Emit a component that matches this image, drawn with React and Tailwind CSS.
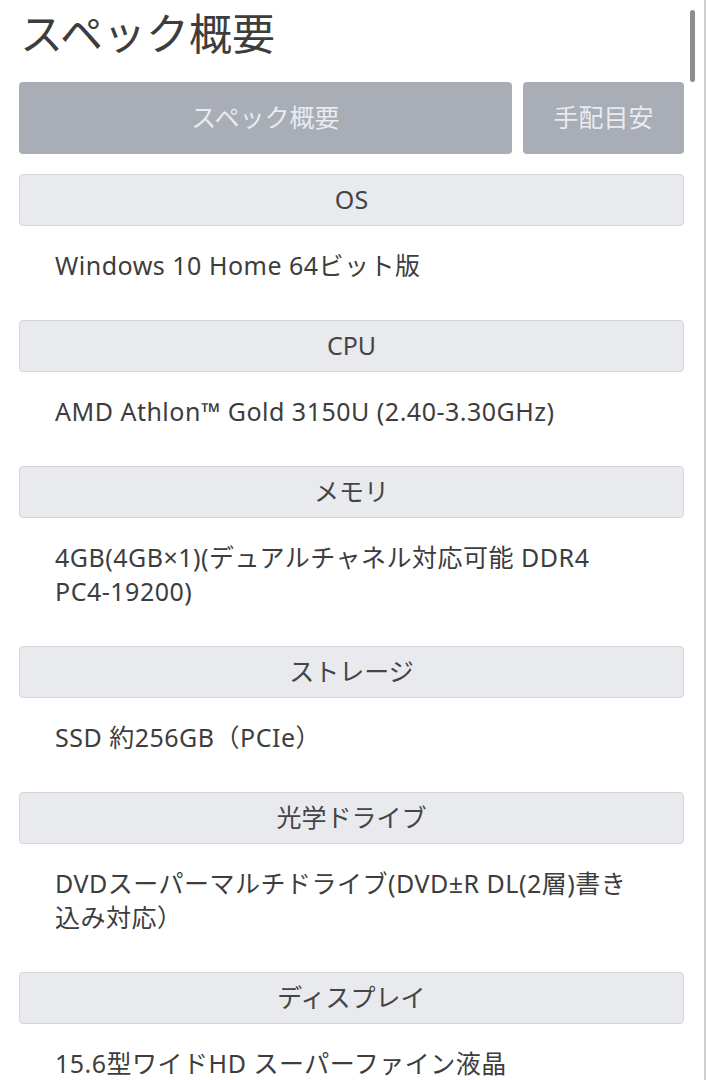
const specs = [
  { label: 'OS', value: 'Windows 10 Home 64ビット版' },
  { label: 'CPU', value: 'AMD Athlon™ Gold 3150U (2.40-3.30GHz)' },
  { label: 'メモリ', value: '4GB(4GB×1)(デュアルチャネル対応可能 DDR4 PC4-19200)' },
  { label: 'ストレージ', value: 'SSD 約256GB（PCIe）' },
  { label: '光学ドライブ', value: 'DVDスーパーマルチドライブ(DVD±R DL(2層)書き込み対応）' },
  { label: 'ディスプレイ', value: '15.6型ワイドHD スーパーファイン液晶' },
]

export default function App() {
  return (
    <div
      className="relative w-[706px] h-[1080px] overflow-hidden bg-white border-r-2 border-[#cfcfcf] pl-[19px] pr-[20px]"
      style={{ fontFamily: '"Noto Sans", "Noto Sans CJK JP", sans-serif' }}
    >
      <div className="absolute right-[9px] top-[10px] w-[5px] h-[72px] rounded-full bg-[#8c8c8c]" />

      <h1 className="pt-[6px] pl-[1px] text-[43px] leading-[56px] text-[#3d3d3d] font-normal">
        スペック概要
      </h1>

      <div className="mt-[20px] flex gap-[11px]">
        <div className="flex-1 h-[72px] rounded-[4px] bg-[#a8adb6] flex items-center justify-center text-[25px] text-[#e9ebef]">
          スペック概要
        </div>
        <div className="w-[161px] h-[72px] rounded-[4px] bg-[#a8adb6] flex items-center justify-center text-[25px] text-[#e9ebef]">
          手配目安
        </div>
      </div>

      <div className="mt-[20px]">
        {specs.map(s => (
          <div key={s.label}>
            <div className="h-[52px] rounded-[4px] border border-[#d4d5d9] bg-[#e9eaee] flex items-center justify-center text-[25px] text-[#454545]">
              {s.label}
            </div>
            <div className="pl-[36px] pr-[34px] pt-[22px] pb-[38px] text-[25px] leading-[34px] tracking-[0.5px] text-[#3d3d3d]">
              {s.value}
            </div>
          </div>
        ))}
      </div>
    </div>
  )
}
